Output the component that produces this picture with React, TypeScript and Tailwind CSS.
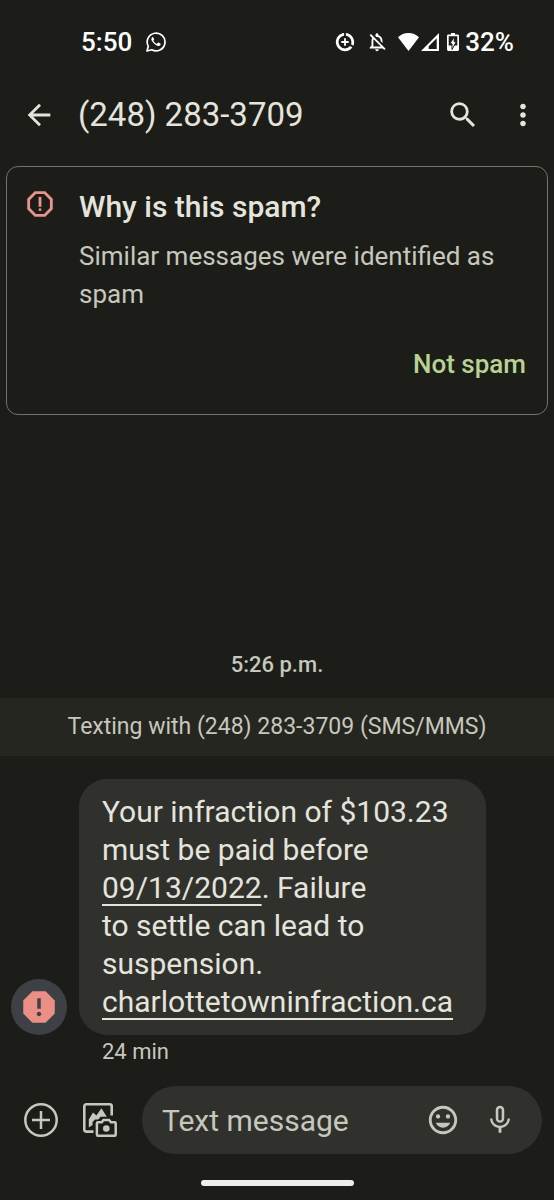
import type { ReactNode } from "react";
import {
	MdArrowBack,
	MdDataSaverOn,
	MdInsertEmoticon,
	MdMicNone,
	MdMoreVert,
	MdOutlineNotificationsOff,
	MdOutlineReport,
	MdReport,
	MdSearch,
} from "react-icons/md";

const PHONE = "(248) 283-3709";

function WhatsAppIcon() {
	return (
		<svg viewBox="0 0 20 20" className="size-5" fill="none" aria-label="WhatsApp">
			<path d="M1 19l1.3-4.7A8.9 8.9 0 1 1 5.8 17.8z" stroke="currentColor" strokeWidth="1.7" strokeLinejoin="round" />
			<path
				d="M7.2 5.400c-.3-.5-.8-.4-1.200 0-.9 1-.8 2.400 0 3.700 1.300 2.200 3 3.800 5.400 4.700 1.400.5 2.800 0 3.200-1.300.2-.7 0-.9-.4-1.100l-1.600-.8c-.4-.2-.6-.1-.9.3l-.5.7c-.2.2-.4.2-.7.1-1.400-.6-2.300-1.500-3-2.700-.2-.3-.1-.5.1-.7l.5-.7c.1-.2.1-.3 0-.6z"
				fill="currentColor"
			/>
		</svg>
	);
}

function WifiIcon() {
	return (
		<svg viewBox="0 0 21 18" className="h-[18px] w-[21px]" fill="currentColor" aria-label="Wi-Fi">
			<path d="M0 4.2C2.8 1.5 6.5 0 10.5 0S18.2 1.5 21 4.2L10.5 18z" />
		</svg>
	);
}

function SignalIcon() {
	return (
		<svg viewBox="0 0 18 18" className="size-[18px]" aria-label="Mobile signal">
			<path fillRule="evenodd" d="M18 0v18H0zM15.7 5.3L7.7 13.3v2.6h8z" fill="currentColor" />
		</svg>
	);
}

function BatteryIcon() {
	return (
		<svg viewBox="0 0 12 18" className="h-[18px] w-3" aria-label="Battery charging">
			<path
				fillRule="evenodd"
				d="M4 0h4v1.6h2.6c.8 0 1.4.6 1.4 1.4v13.6c0 .8-.6 1.4-1.4 1.4H1.4C.6 18 0 17.4 0 16.6V3c0-.8.6-1.4 1.4-1.4H4zM1.7 3.3v9.2h8.6V3.3z"
				fill="currentColor"
			/>
			<path d="M7.2 3.8L2.8 10.8h2.2v5.7L9.3 8.8H7.2z" fill="currentColor" stroke="#1c1d18" strokeWidth="1" />
		</svg>
	);
}

function AddIcon() {
	return (
		<svg viewBox="0 0 34 34" className="size-[34px]" fill="none" stroke="currentColor" strokeWidth="2.5">
			<circle cx="17" cy="17" r="15.7" />
			<path d="M17 8v18M8 17h18" />
		</svg>
	);
}

function GalleryIcon() {
	return (
		<svg viewBox="0 0 34 34" className="size-[34px]" fill="none" stroke="currentColor">
			<path d="M10.5 28.6H3.3a2 2 0 0 1-2-2V3.3a2 2 0 0 1 2-2h23.4a2 2 0 0 1 2 2V12.5" strokeWidth="2.6" />
			<path
				d="M5.8 24.5V16.5L10 9.5l3.4 3L18.4 5.2l5.4 8.6h-6.200l-2.300 2.600h-3.300l-2.500 2.600v3z"
				fill="currentColor"
				stroke="none"
			/>
			<path
				d="M14.9 19.3h3.8l1.8-2.3h5.6l1.8 2.3h3.8a1 1 0 0 1 1 1v11.4a1 1 0 0 1-1 1H14.9a1 1 0 0 1-1-1V20.3a1 1 0 0 1 1-1z"
				strokeWidth="2.5"
			/>
			<circle cx="23.3" cy="25.5" r="3.3" fill="currentColor" stroke="none" />
		</svg>
	);
}

function IconButton({ label, children }: { label: string; children: ReactNode }) {
	return (
		<button type="button" aria-label={label} className="flex shrink-0 items-center justify-center">
			{children}
		</button>
	);
}

function StatusBar() {
	return (
		<div className="flex h-[84px] items-center pr-10 pl-[81px] text-white">
			<span className="text-[26px] font-medium">5:50</span>
			<span className="ml-3.5">
				<WhatsAppIcon />
			</span>
			<div className="ml-auto flex items-center">
				<MdDataSaverOn className="mr-2.5 size-[22px]" />
				<MdOutlineNotificationsOff className="mr-2.5 size-[22px]" />
				<WifiIcon />
				<span className="ml-0.5">
					<SignalIcon />
				</span>
				<span className="mr-1.5 ml-2">
					<BatteryIcon />
				</span>
				<span className="text-[26px] font-medium">32%</span>
			</div>
		</div>
	);
}

function Header() {
	return (
		<header className="flex h-[62px] items-center pr-3.5 pl-[22px]">
			<IconButton label="Back">
				<MdArrowBack className="size-[34px]" />
			</IconButton>
			<h1 className="ml-[22px] flex-1 text-[33px]">{PHONE}</h1>
			<IconButton label="Search">
				<MdSearch className="size-[34px]" />
			</IconButton>
			<span className="ml-[26px] flex">
				<IconButton label="More options">
					<MdMoreVert className="size-[34px]" />
				</IconButton>
			</span>
		</header>
	);
}

function SpamCard() {
	return (
		<section className="mx-1.5 mt-5 flex rounded-xl border border-[#72736c] pt-5 pr-[21px] pb-[30px] pl-4">
			<MdOutlineReport className="size-[34px] shrink-0 text-[#e8938c]" />
			<div className="ml-[22px] flex flex-1 flex-col">
				<h2 className="text-[30px] leading-10 font-medium">Why is this spam?</h2>
				<p className="mt-2.5 text-[26px] leading-[38px] text-[#c6c7bd]">Similar messages were identified as spam</p>
				<button type="button" className="mt-[31px] self-end text-[26px] leading-10 font-medium text-[#b9d293]">
					Not spam
				</button>
			</div>
		</section>
	);
}

function Message() {
	return (
		<div className="mt-[23px] flex items-end pl-[11px]">
			<div className="flex size-14 shrink-0 items-center justify-center rounded-full bg-[#3d4145]">
				<MdReport className="size-[42px] text-[#ea8f86]" />
			</div>
			<p className="ml-3 rounded-[28px] bg-[#30312c] py-3.5 pr-[33px] pl-[23px] text-[30px] leading-[38px]">
				Your infraction of $103.23
				<br />
				must be paid before
				<br />
				<a href="#date" className="underline decoration-2 underline-offset-[6px]">
					09/13/2022
				</a>
				. Failure
				<br />
				to settle can lead to
				<br />
				suspension.
				<br />
				<a href="#link" className="underline decoration-2 underline-offset-[6px]">
					charlottetowninfraction.ca
				</a>
			</p>
		</div>
	);
}

function Composer() {
	return (
		<form className="mt-[18px] flex items-center pr-3 pl-6 text-[#c6c7bd]">
			<IconButton label="Add attachment">
				<AddIcon />
			</IconButton>
			<span className="ml-[25px] flex">
				<IconButton label="Gallery">
					<GalleryIcon />
				</IconButton>
			</span>
			<div className="ml-[25px] flex h-[68px] min-w-0 flex-1 items-center rounded-full bg-[#30312c] pr-[25px] pl-5">
				<input
					type="text"
					aria-label="Text message"
					placeholder="Text message"
					className="min-w-0 flex-1 bg-transparent text-[30px] outline-none placeholder:text-[#c6c7bd]"
				/>
				<IconButton label="Emoji">
					<MdInsertEmoticon className="size-[34px]" />
				</IconButton>
				<span className="ml-[23px] flex">
					<IconButton label="Voice message">
						<MdMicNone className="size-[34px]" />
					</IconButton>
				</span>
			</div>
		</form>
	);
}

export default function App() {
	return (
		<div className="flex min-h-screen flex-col bg-[#1c1d18] font-['Roboto','Noto_Sans',sans-serif] text-[#e5e4dc]">
			<StatusBar />
			<Header />
			<SpamCard />
			<main className="mt-auto">
				<p className="text-center text-[22px] leading-8 font-medium text-[#c6c7bd]">5:26 p.m.</p>
				<p className="mt-[17px] bg-[#25261f] text-center text-[23px] leading-[58px] text-[#c6c7bd]">
					Texting with {PHONE} (SMS/MMS)
				</p>
				<Message />
				<p className="mt-px ml-[102px] text-[22px] leading-8 text-[#c6c7bd]">24 min</p>
				<Composer />
			</main>
			<div className="mx-auto mt-[26px] mb-3.5 h-1.5 w-[153px] rounded-full bg-[#eeeeec]" />
		</div>
	);
}
